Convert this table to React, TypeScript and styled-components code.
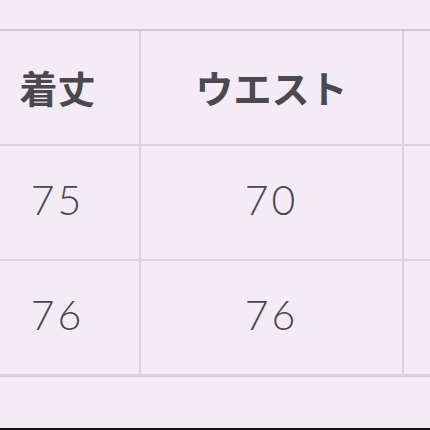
import React from "react";
import styled, { createGlobalStyle } from "styled-components";

const Global = createGlobalStyle`
  html, body { margin: 0; padding: 0; background: #f3ecf7; }
  body { overflow: hidden; }
`;

const Page = styled.div`
  width: 430px;
  height: 430px;
  display: flex;
  flex-direction: column;
  background: #f3ecf7;
  overflow: hidden;
  padding-top: 29px;
  box-sizing: border-box;
`;

const Table = styled.div`
  display: grid;
  grid-template-columns: 165px 263px 60px;
  margin-left: -24px;
  border-top: 2px solid #d0c9d5;
  border-bottom: 1px solid #d0c9d5;
`;

const Cell = styled.div<{ $header?: boolean }>`
  box-sizing: border-box;
  height: 115px;
  border-right: 2px solid #dbd4df;
  border-bottom: 2px solid #dbd4df;
  display: flex;
  align-items: center;
  justify-content: center;
  color: #4b484e;
  font-family: ${(p) =>
    p.$header ? `"Noto Sans CJK JP", sans-serif` : `"Lato", "Noto Sans", sans-serif`};
  font-weight: ${(p) => (p.$header ? 700 : 300)};
  font-size: ${(p) => (p.$header ? "38px" : "41px")};
  letter-spacing: ${(p) => (p.$header ? "0px" : "3px")};
  padding-bottom: ${(p) => (p.$header ? "2px" : "6px")};
`;

const BottomBar = styled.div`
  margin-top: auto;
  height: 2px;
  background: #111;
`;

const rows = [
  ["着丈", "ウエスト", ""],
  ["75", "70", ""],
  ["76", "76", ""],
];

export default function App() {
  return (
    <>
      <Global />
      <Page>
        <Table>
          {rows.map((r, i) =>
            r.map((c, j) => (
              <Cell key={`${i}-${j}`} $header={i === 0}>
                {c}
              </Cell>
            ))
          )}
        </Table>
        <BottomBar />
      </Page>
    </>
  );
}
